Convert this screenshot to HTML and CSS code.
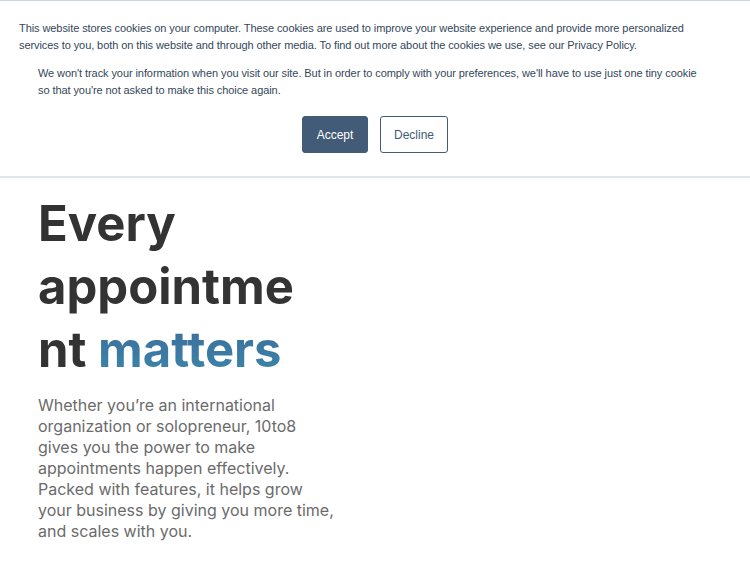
FILE: index.html
```html
<!DOCTYPE html>
<html lang="en">
<head>
<meta charset="utf-8">
<title>10to8</title>
<link rel="stylesheet" href="styles.css">
</head>
<body>
<div class="cookie-banner">
  <p class="cookie-main">This website stores cookies on your computer. These cookies are used to improve your website experience and provide more personalized services to you, both on this website and through other media. To find out more about the cookies we use, see our Privacy Policy.</p>
  <p class="cookie-sub">We won't track your information when you visit our site. But in order to comply with your preferences, we'll have to use just one tiny cookie so that you're not asked to make this choice again.</p>
  <div class="cookie-actions">
    <button class="btn btn-accept">Accept</button>
    <button class="btn btn-decline">Decline</button>
  </div>
</div>
<main class="hero">
  <h1 class="hero-title">Every appointment <span class="accent">matters</span></h1>
  <p class="hero-text">Whether you’re an international<br>organization or solopreneur, 10to8<br>gives you the power to make<br>appointments happen effectively.<br>Packed with features, it helps grow<br>your business by giving you more time,<br>and scales with you.</p>
</main>
</body>
</html>
```
FILE: styles.css
```css
html, body {
  margin: 0;
  padding: 0;
  background: #ffffff;
}

.cookie-banner {
  border-top: 1px solid #cbd6e2;
  border-bottom: 2px solid #dfe5ec;
  padding: 19px 19px 23px 19px;
  font-family: "Liberation Sans", Arial, sans-serif;
  font-size: 11px;
  line-height: 17px;
  letter-spacing: -0.08px;
  color: #33475b;
}

.cookie-main {
  margin: 0;
  max-width: 700px;
}

.cookie-sub {
  margin: 11px 0 0 19px;
  max-width: 666px;
}

.cookie-actions {
  display: flex;
  justify-content: center;
  gap: 12px;
  margin-top: 17px;
}

.btn {
  height: 37px;
  padding: 0 10px;
  border-radius: 3px;
  font-family: "Liberation Sans", Arial, sans-serif;
  font-size: 12px;
  border: 1px solid #425b76;
  cursor: pointer;
}

.btn-accept {
  background: #425b76;
  color: #ffffff;
  width: 66px;
}

.btn-decline {
  background: #ffffff;
  color: #425b76;
  width: 68px;
}

.hero {
  padding: 0 38px;
}

.hero-title {
  width: 265px;
  margin: 14px 0 0 0;
  font-family: "Inter", "Noto Sans", sans-serif;
  font-weight: 700;
  font-size: 49px;
  line-height: 63px;
  color: #333333;
  overflow-wrap: anywhere;
}

.accent {
  background: linear-gradient(180deg, #3d6a9a 0%, #3b88ab 100%);
  -webkit-background-clip: text;
  background-clip: text;
  color: transparent;
}

.hero-text {
  margin: 14px 0 0 0;
  font-family: "Inter", "Noto Sans", sans-serif;
  font-size: 16px;
  line-height: 21px;
  color: #6b6b6b;
  white-space: nowrap;
}
```
